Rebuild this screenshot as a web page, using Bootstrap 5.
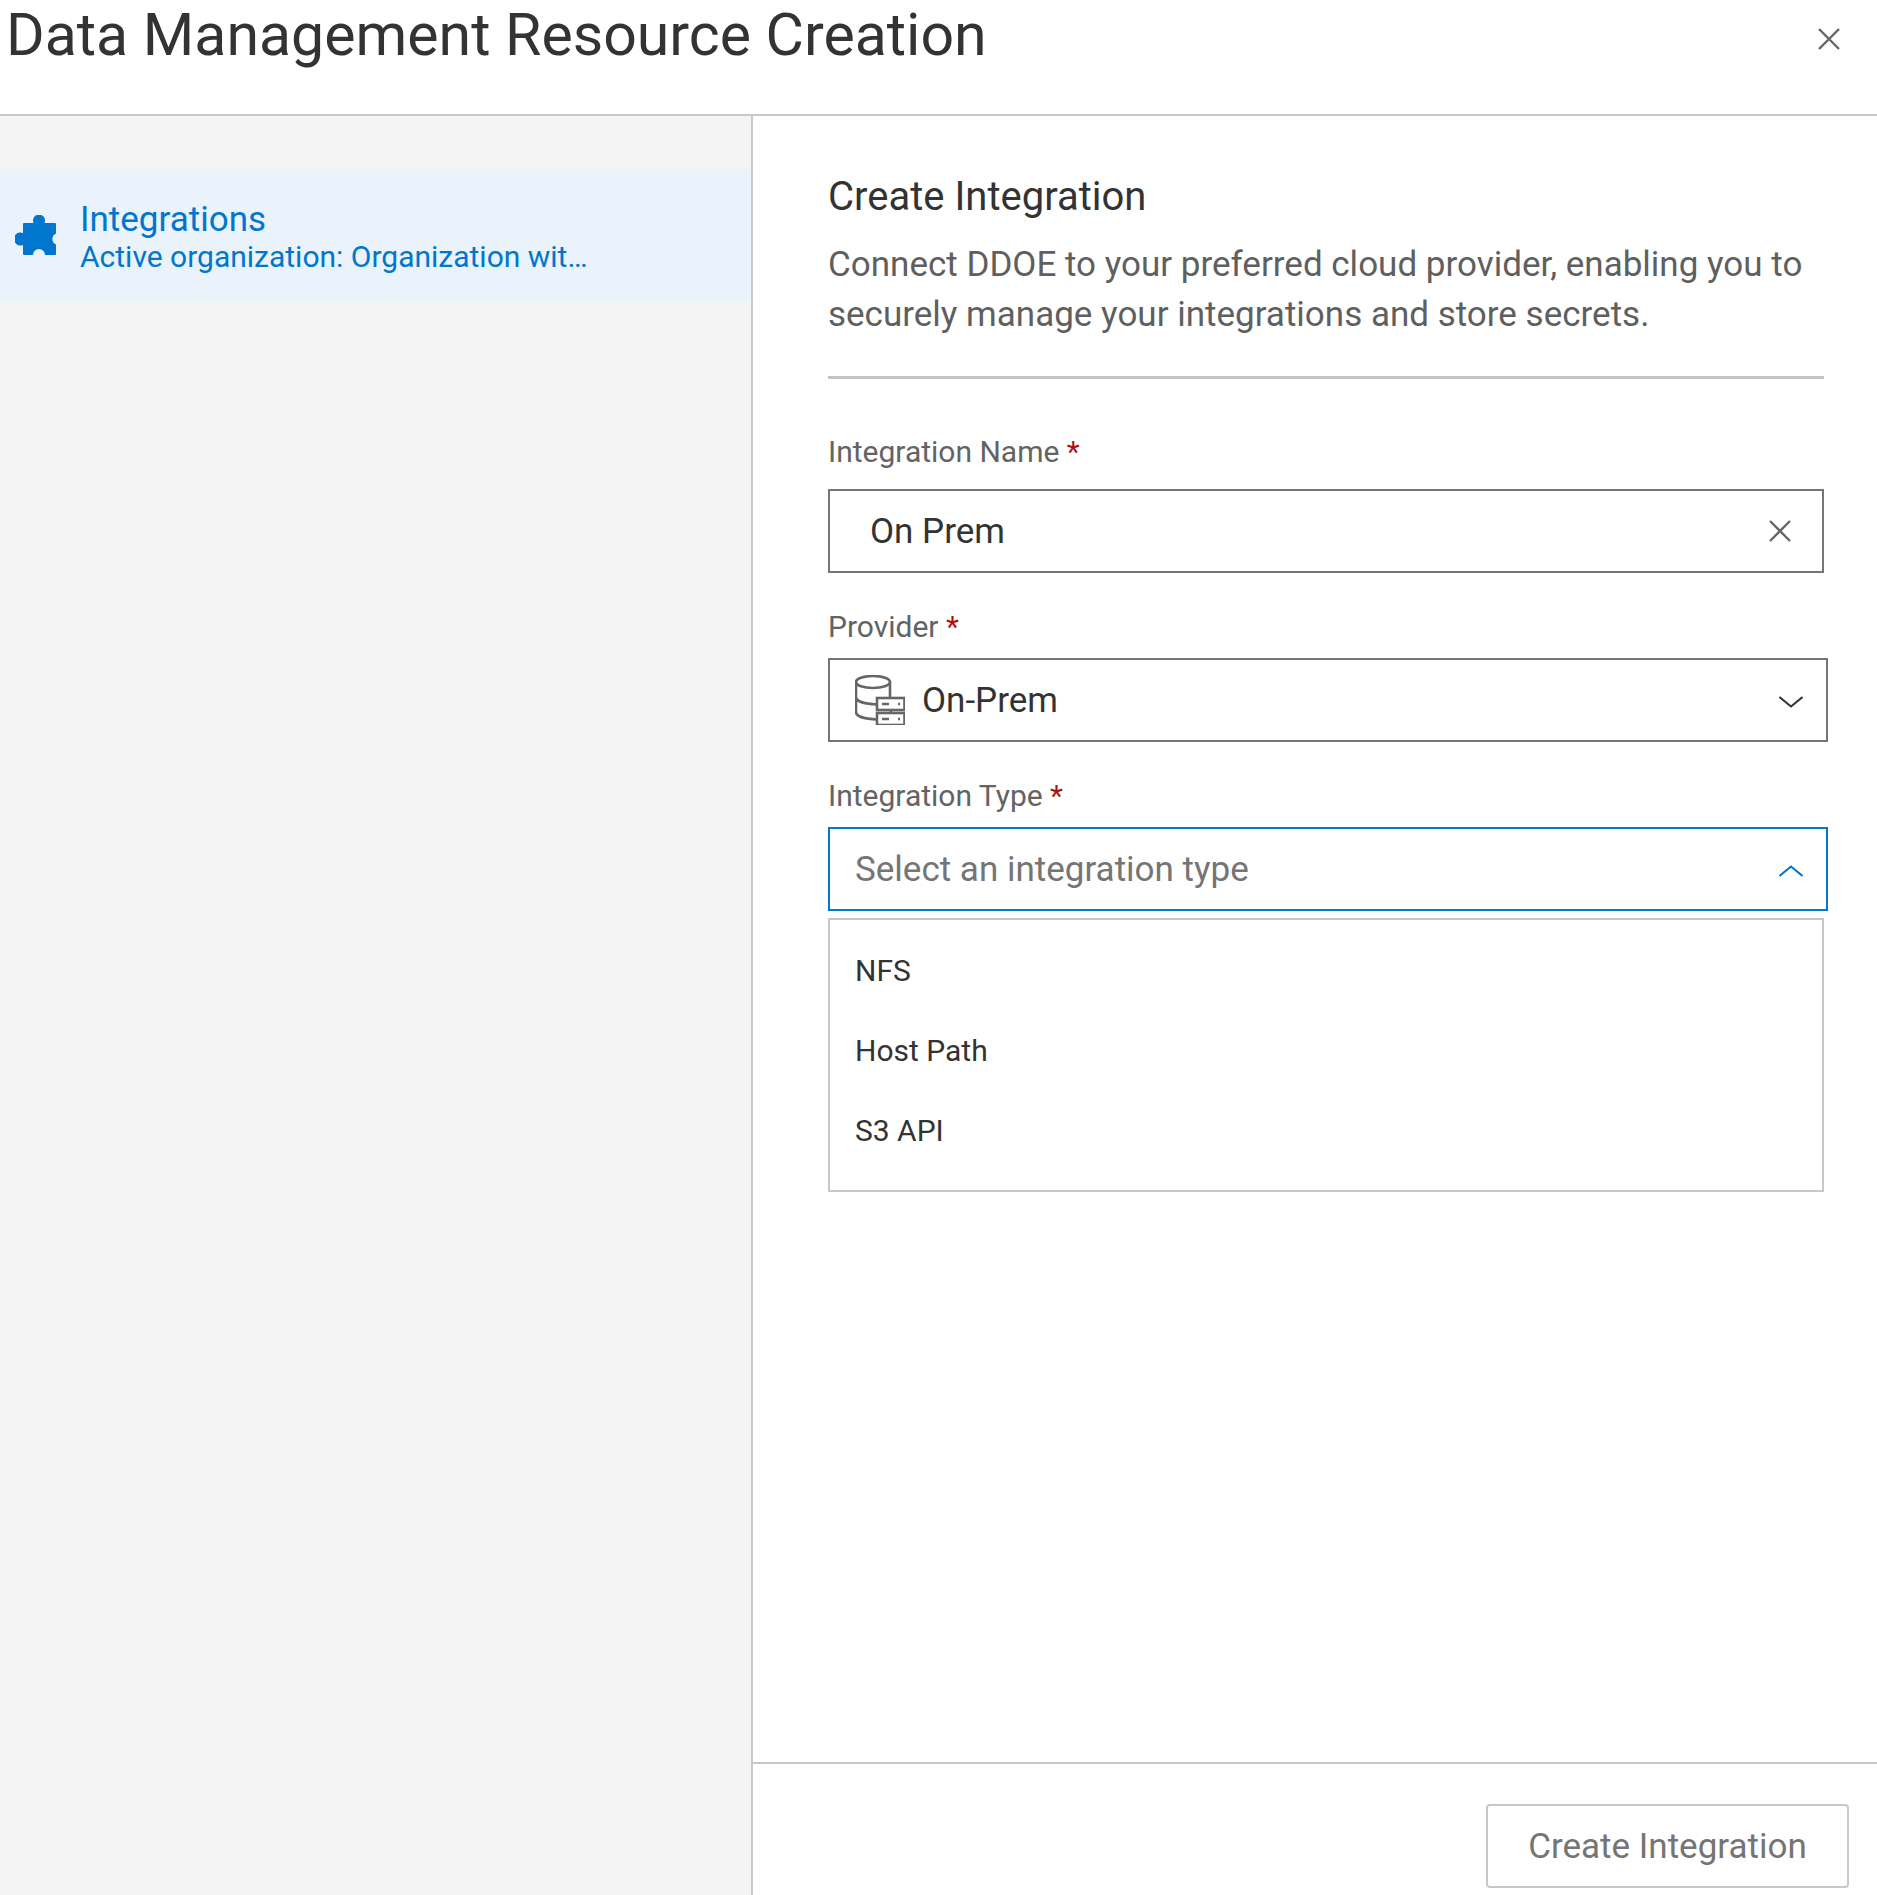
<!DOCTYPE html>
<html lang="en">

<head>
    <meta charset="UTF-8">
    <meta name="viewport" content="width=device-width, initial-scale=1.0">
    <title>Data Management Resource Creation</title>
    <link href="https://cdn.jsdelivr.net/npm/bootstrap@5.3.0/dist/css/bootstrap.min.css" rel="stylesheet">
    <style>
        html, body { height: 100%; }

        body {
            font-family: Roboto, "Liberation Sans", sans-serif;
            color: #333;
            background: #fff;
            overflow: hidden;
        }

        .page-head {
            height: 116px;
            border-bottom: 2px solid #c8c8c8;
            padding: 0 37px 0 6px;
        }

        .page-title {
            font-size: 59px;
            line-height: 70px;
            font-weight: 400;
            margin: 0;
            color: #333;
        }

        .head-close { margin-top: 28px; }

        .side-col {
            width: 753px;
            background: #f4f4f4;
            border-right: 2px solid #c8c8c8;
            padding-top: 53px;
        }

        .side-item {
            height: 132px;
            background: #eaf3fb;
            color: #0076ce;
            padding-left: 15px;
        }

        .side-icon { margin-right: 24px; }
        .side-name { font-size: 35px; line-height: 41px; margin: 3px 0 -1px; }
        .side-sub { font-size: 30px; line-height: 36px; }

        .main-form { padding: 59px 53px 0 75px; }

        .form-heading {
            font-size: 40px;
            line-height: 44px;
            font-weight: 400;
            margin: 0 0 21px;
        }

        .form-desc {
            font-size: 35px;
            line-height: 49.5px;
            color: #5f5f5f;
            margin: 0 0 37px;
        }

        .form-rule {
            height: 3px;
            background: #c3c3c3;
            margin-bottom: 55px;
        }

        .field-label {
            display: block;
            font-size: 30px;
            line-height: 36px;
            color: #636363;
            margin-bottom: 13px;
        }

        .field-label b { color: #b00f0f; font-weight: 400; }
        .first-label { margin-bottom: 19px; }

        .field-box {
            height: 84px;
            border: 2px solid #757575;
            font-size: 35px;
            margin-bottom: 36px;
        }

        .field-text { padding-top: 2px; }
        .name-box { padding: 0 31px 0 40px; }
        .pick-box { margin-right: -4px; padding: 0 23px 0 25px; }
        .type-box { border-color: #0076ce; color: #757575; margin-bottom: 7px; }
        .db-icon { margin-right: 17px; }
        .pick-arrow { margin-top: 4px; }

        .type-menu {
            height: 274px;
            border: 2px solid #c8c8c8;
            padding: 11px 25px;
            font-size: 30px;
        }

        .type-menu div { height: 80px; line-height: 80px; }

        .foot-bar {
            height: 133px;
            border-top: 2px solid #c8c8c8;
            padding: 40px 28px 0 0;
        }

        .btn.create-btn {
            width: 363px;
            height: 84px;
            font-size: 35px;
            color: #757575;
            background: #fff;
            border: 2px solid #c8c8c8;
            border-radius: 4px;
            padding: 2px 0 0;
        }
    </style>
</head>

<body>
    <div class="d-flex flex-column h-100">
        <div class="page-head d-flex justify-content-between align-items-start">
            <h1 class="page-title">Data Management Resource Creation</h1>
            <svg class="head-close" width="22" height="22" viewBox="0 0 22 22" fill="none" stroke="#666" stroke-width="2.400">
                <path d="M1 1l20 20M21 1L1 21" />
            </svg>
        </div>

        <div class="d-flex flex-grow-1">
            <div class="side-col flex-shrink-0">
                <div class="side-item d-flex align-items-center">
                    <svg class="side-icon flex-shrink-0" width="41" height="41" viewBox="0 0 41 41" fill="#0076ce">
                        <path d="M9 8H18.5A6 6 0 1 1 29.5 8H40a1 1 0 0 1 1 1V18.5A6 6 0 0 0 41 29.5V39a1 1 0 0 1-1 1H30A6 6 0 0 0 18 40H9a1 1 0 0 1-1-1V30A6.5 6.5 0 1 1 8 18V9a1 1 0 0 1 1-1Z" />
                    </svg>
                    <div>
                        <div class="side-name">Integrations</div>
                        <div class="side-sub">Active organization: Organization wit…</div>
                    </div>
                </div>
            </div>

            <div class="d-flex flex-column flex-grow-1">
                <div class="main-form flex-grow-1">
                    <h2 class="form-heading">Create Integration</h2>
                    <p class="form-desc">Connect DDOE to your preferred cloud provider, enabling you to securely manage your integrations and store secrets.</p>
                    <div class="form-rule"></div>

                    <label class="field-label first-label">Integration Name <b>*</b></label>
                    <div class="field-box name-box d-flex align-items-center justify-content-between">
                        <span class="field-text">On Prem</span>
                        <svg width="22" height="22" viewBox="0 0 22 22" fill="none" stroke="#666" stroke-width="2.400">
                            <path d="M1 1l20 20M21 1L1 21" />
                        </svg>
                    </div>

                    <label class="field-label">Provider <b>*</b></label>
                    <div class="field-box pick-box d-flex align-items-center justify-content-between">
                        <span class="d-flex align-items-center">
                            <svg class="db-icon" width="50" height="50" viewBox="0 0 50 50" fill="none" stroke="#666" stroke-width="2.600">
                                <ellipse cx="18" cy="7" rx="17" ry="6" />
                                <path d="M1 7V37C1 41 9 44 22 44.500M35 7V23M1 22C1 26 9 29 22 29.500" />
                                <rect x="22" y="23" width="27.500" height="12" />
                                <rect x="22" y="38" width="27.500" height="12" />
                                <path d="M36 35v3M27 29h7M27 44h7M43 29h2M43 44h2" />
                            </svg>
                            <span class="field-text">On-Prem</span>
                        </span>
                        <svg class="pick-arrow" width="24" height="12" viewBox="0 0 24 12" fill="none" stroke="#333" stroke-width="2">
                            <path d="M0.500 1L12 10.500 23.500 1" />
                        </svg>
                    </div>

                    <label class="field-label">Integration Type <b>*</b></label>
                    <div class="field-box pick-box type-box d-flex align-items-center justify-content-between">
                        <span class="field-text">Select an integration type</span>
                        <svg class="pick-arrow" width="24" height="12" viewBox="0 0 24 12" fill="none" stroke="#0076ce" stroke-width="2">
                            <path d="M0.500 11L12 1.500 23.500 11" />
                        </svg>
                    </div>
                    <div class="type-menu">
                        <div>NFS</div>
                        <div>Host Path</div>
                        <div>S3 API</div>
                    </div>
                </div>

                <div class="foot-bar d-flex justify-content-end align-items-start">
                    <button type="button" class="btn create-btn">Create Integration</button>
                </div>
            </div>
        </div>
    </div>

    <script src="https://cdn.jsdelivr.net/npm/bootstrap@5.3.0/dist/js/bootstrap.bundle.min.js"></script>
</body>

</html>
